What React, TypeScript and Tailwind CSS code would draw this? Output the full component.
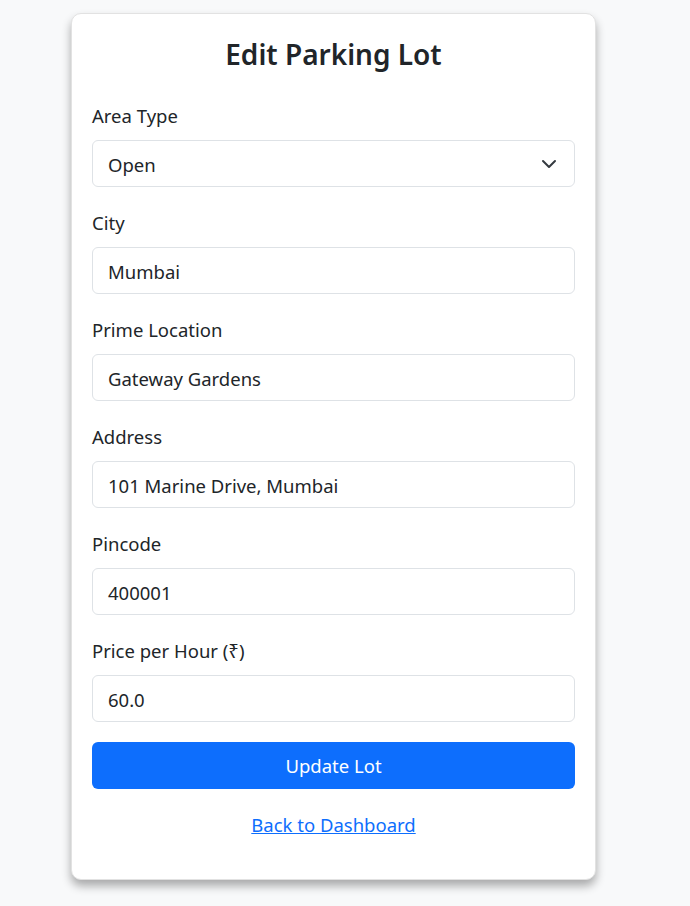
import React from "react";

const fields = [
  { label: "City", value: "Mumbai" },
  { label: "Prime Location", value: "Gateway Gardens" },
  { label: "Address", value: "101 Marine Drive, Mumbai" },
  { label: "Pincode", value: "400001" },
  { label: "Price per Hour (₹)", value: "60.0" },
];

function Label({ children }: { children: React.ReactNode }) {
  return <div className="h-[28px] leading-[28px] text-[18.5px] text-[#212529] mb-[10px]">{children}</div>;
}

export default function App() {
  return (
    <div
      className="min-h-[906px] bg-[#f8f9fa] w-full"
      style={{ fontFamily: '"Noto Sans", "Open Sans", sans-serif' }}
    >
      <div className="w-[667px] flex justify-center pt-[13px]">
        <div className="w-[525px] bg-white rounded-[10px] border border-[#e2e2e2] shadow-[0_6px_10px_rgba(0,0,0,0.32)] px-[20px] pt-[22px] pb-[40px]">
          <h2 className="text-center text-[28px] leading-[36px] font-semibold text-[#212529] mb-[30px]">
            Edit Parking Lot
          </h2>
          <div className="mb-[22px]">
            <Label>Area Type</Label>
            <div className="h-[47px] border border-[#dee2e6] rounded-[6px] pl-[15px] pr-[17px] pt-[3px] flex items-center justify-between text-[18.5px] text-[#212529]">
              <span>Open</span>
              <svg width="16" height="16" viewBox="0 0 16 16" className="-mt-[3px]">
                <path d="M2 5l6 6 6-6" fill="none" stroke="#343a40" strokeWidth="2" strokeLinecap="round" strokeLinejoin="round" />
              </svg>
            </div>
          </div>
          {fields.map((f, i) => (
            <div key={f.label} className={i === fields.length - 1 ? "mb-[20px]" : "mb-[22px]"}>
              <Label>{f.label}</Label>
              <div className="h-[47px] border border-[#dee2e6] rounded-[6px] px-[15px] pt-[3px] flex items-center text-[18.5px] text-[#212529]">
                {f.value}
              </div>
            </div>
          ))}
          <button className="w-full h-[47px] bg-[#0d6efd] text-white rounded-[6px] text-[18.5px] flex items-center justify-center">
            Update Lot
          </button>
          <div className="mt-[22px] text-center h-[28px] leading-[28px]">
            <a href="#" className="text-[18.5px] text-[#0d6efd] underline">
              Back to Dashboard
            </a>
          </div>
        </div>
      </div>
    </div>
  );
}
